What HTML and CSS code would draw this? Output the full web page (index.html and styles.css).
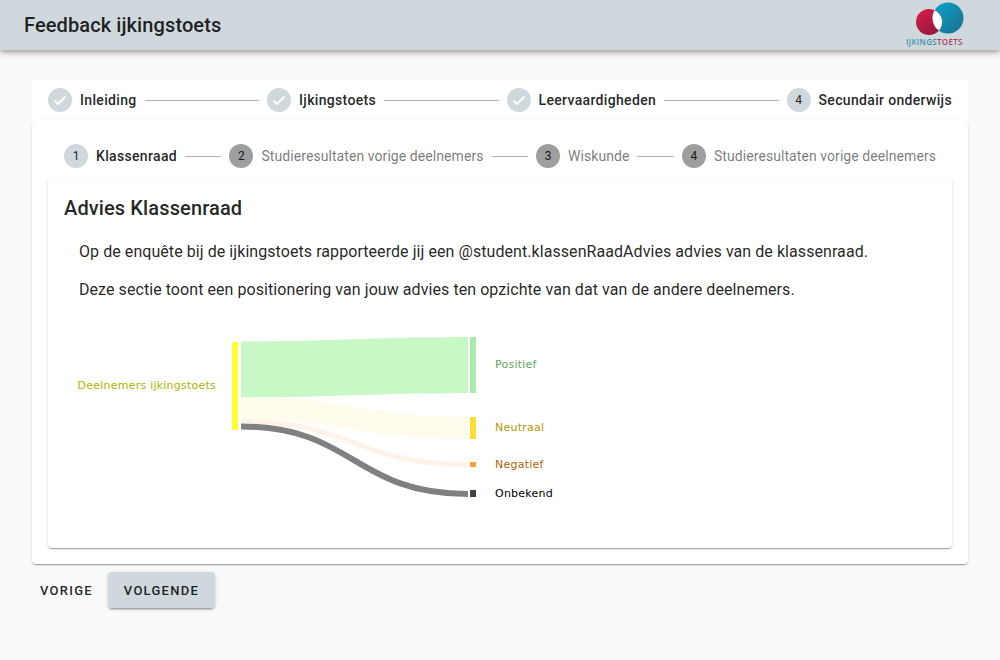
FILE: index.html
```html
<!DOCTYPE html>
<html>
<head>
    <title>Feedback ijkingstoets</title>
    <link rel="stylesheet" href="styles.css">
</head>
<body>
    <header class="topbar">
        <h1>Feedback ijkingstoets</h1>
        <div class="logo">
            <svg width="58" height="36" viewBox="0 0 58 36">
                <defs>
                    <linearGradient id="blue" x1="0" y1="0" x2="1" y2="1">
                        <stop offset="0" stop-color="#0aa3cc"/>
                        <stop offset="1" stop-color="#1d6f8e"/>
                    </linearGradient>
                    <linearGradient id="red" x1="0" y1="0" x2="0.8" y2="1">
                        <stop offset="0" stop-color="#e01a4a"/>
                        <stop offset="1" stop-color="#8e1a3c"/>
                    </linearGradient>
                </defs>
                <circle cx="42" cy="18" r="15.500" fill="url(#blue)"/>
                <circle cx="23" cy="22" r="13" fill="url(#red)"/>
                <path d="M28.600 10.190A13 13 0 0 1 32.880 30.550 15.500 15.500 0 0 1 28.600 10.190Z" fill="#fff"/>
            </svg>
            <span class="logo-text">IJKINGS<b>TOETS</b></span>
        </div>
    </header>

    <main class="page">
        <div class="stepper-top">
            <div class="step">
                <span class="dot"><svg class="check" width="16" height="16" viewBox="0 0 16 16"><path d="M2.500 8.500 6 12 13.500 4.500"/></svg></span>
                <span class="step-label">Inleiding</span>
            </div>
            <div class="line"></div>
            <div class="step">
                <span class="dot"><svg class="check" width="16" height="16" viewBox="0 0 16 16"><path d="M2.500 8.500 6 12 13.500 4.500"/></svg></span>
                <span class="step-label">Ijkingstoets</span>
            </div>
            <div class="line"></div>
            <div class="step">
                <span class="dot"><svg class="check" width="16" height="16" viewBox="0 0 16 16"><path d="M2.500 8.500 6 12 13.500 4.500"/></svg></span>
                <span class="step-label">Leervaardigheden</span>
            </div>
            <div class="line"></div>
            <div class="step">
                <span class="dot">4</span>
                <span class="step-label">Secundair onderwijs</span>
            </div>
        </div>

        <section class="outer-card">
            <div class="stepper-sub">
                <div class="step">
                    <span class="dot">1</span>
                    <span class="step-label">Klassenraad</span>
                </div>
                <div class="line"></div>
                <div class="step">
                    <span class="dot dot-off">2</span>
                    <span class="step-label off">Studieresultaten vorige deelnemers</span>
                </div>
                <div class="line"></div>
                <div class="step">
                    <span class="dot dot-off">3</span>
                    <span class="step-label off">Wiskunde</span>
                </div>
                <div class="line"></div>
                <div class="step">
                    <span class="dot dot-off">4</span>
                    <span class="step-label off">Studieresultaten vorige deelnemers</span>
                </div>
            </div>

            <div class="inner-card">
                <h2>Advies Klassenraad</h2>
                <div class="intro">
                    <p>Op de enquête bij de ijkingstoets rapporteerde jij een @student.klassenRaadAdvies advies van de klassenraad.</p>
                    <p>Deze sectie toont een positionering van jouw advies ten opzichte van dat van de andere deelnemers.</p>
                </div>
                <svg class="sankey" width="600" height="200" viewBox="64 320 600 200">
                    <path d="M241 369.500C354 369.500 354 365 468 365" fill="none" stroke="#c8f8c6" stroke-width="56"/>
                    <path d="M241 408.500C354 408.500 354 428 468 428" fill="none" stroke="#fffcec" stroke-width="22"/>
                    <path d="M241 421.500C354 421.500 354 464.500 468 464.500" fill="none" stroke="#fff2e8" stroke-width="5"/>
                    <path d="M241 426.500C354 426.500 354 494 468 494" fill="none" stroke="#808080" stroke-width="6"/>

                    <rect x="232" y="342" width="6" height="88" fill="#ffff33"/>
                    <rect x="470" y="337" width="6" height="56" fill="#a8eeaa"/>
                    <rect x="470" y="417" width="6" height="22" fill="#ffdd33"/>
                    <rect x="470" y="462" width="6" height="5" fill="#ffa033"/>
                    <rect x="470" y="490" width="6" height="7" fill="#444444"/>

                    <text class="node-text" x="216" y="389" text-anchor="end" fill="#b3b300">Deelnemers ijkingstoets</text>
                    <text class="node-text" x="495" y="368" fill="#5ca85c">Positief</text>
                    <text class="node-text" x="495" y="431" fill="#b39a00">Neutraal</text>
                    <text class="node-text" x="495" y="468" fill="#b36200">Negatief</text>
                    <text class="node-text" x="495" y="497" fill="#000000">Onbekend</text>
                </svg>
            </div>
        </section>

        <div class="actions">
            <button class="btn btn-text">Vorige</button>
            <button class="btn btn-raised">Volgende</button>
        </div>
    </main>
</body>
</html>
```

FILE: styles.css
```css
body {
    margin: 0;
    height: 660px;
    overflow: hidden;
    background-color: #fafafa;
    color: rgba(0, 0, 0, 0.87);
    font-family: Roboto, "Liberation Sans", sans-serif;
}

.topbar {
    height: 50px;
    padding: 0 36px 0 24px;
    display: flex;
    align-items: center;
    justify-content: space-between;
    background-color: #cfd8dc;
    box-shadow: 0 2px 4px -1px rgba(0, 0, 0, 0.2), 0 4px 5px 0 rgba(0, 0, 0, 0.14), 0 1px 10px 0 rgba(0, 0, 0, 0.12);
}

.topbar h1 {
    margin: 0;
    font-size: 20px;
    font-weight: 500;
    letter-spacing: 0.1px;
}

.logo {
    width: 58px;
    align-self: flex-start;
}

.logo svg {
    display: block;
}

.logo-text {
    display: block;
    font-family: "Open Sans", sans-serif;
    font-size: 8px;
    font-weight: 600;
    line-height: 11px;
    letter-spacing: 0.3px;
    color: #3f8fae;
    white-space: nowrap;
}

.logo-text b {
    font-weight: 600;
    color: #b2415f;
}

.page {
    padding: 30px 32px 0;
}

.stepper-top {
    height: 40px;
    padding: 0 16px;
    display: flex;
    align-items: center;
    background-color: #fff;
}

.stepper-sub {
    height: 40px;
    padding: 16px 16px 0;
    display: flex;
    align-items: center;
}

.step {
    display: flex;
    align-items: center;
    gap: 8px;
    white-space: nowrap;
}

.dot {
    width: 24px;
    height: 24px;
    border-radius: 50%;
    display: flex;
    align-items: center;
    justify-content: center;
    background-color: #cfd8dc;
    font-size: 12px;
}

.dot-off {
    background-color: #9e9e9e;
}

.check path {
    fill: none;
    stroke: #fff;
    stroke-width: 2;
}

.step-label {
    font-size: 14px;
    font-weight: 500;
    letter-spacing: 0.33px;
}

.step-label.off {
    font-weight: 400;
    letter-spacing: 0.07px;
    color: rgba(0, 0, 0, 0.54);
}

.line {
    flex: 1;
    margin: 0 8px;
    border-top: 1px solid rgba(0, 0, 0, 0.3);
}

.outer-card {
    height: 444px;
    padding: 0 16px;
    background-color: #fff;
    border-radius: 4px;
    box-shadow: 0 2px 1px -1px rgba(0, 0, 0, 0.2), 0 1px 1px 0 rgba(0, 0, 0, 0.14), 0 1px 3px 0 rgba(0, 0, 0, 0.12);
}

.inner-card {
    height: 371px;
    margin-top: 1px;
    background-color: #fff;
    border-radius: 4px;
    box-shadow: 0 2px 1px -1px rgba(0, 0, 0, 0.2), 0 1px 1px 0 rgba(0, 0, 0, 0.14), 0 1px 3px 0 rgba(0, 0, 0, 0.12);
}

.inner-card h2 {
    margin: 0;
    padding: 16px 16px 0;
    font-size: 20px;
    line-height: 30px;
    font-weight: 500;
    letter-spacing: 0.12px;
}

.intro {
    padding: 17px 16px 0 31px;
    font-size: 16px;
    line-height: 24px;
    letter-spacing: 0.065px;
}

.intro p {
    margin: 0 0 14px;
}

.sankey {
    display: block;
    margin: 18px 0 0 16px;
}

.node-text {
    font-family: "DejaVu Sans", sans-serif;
    font-size: 11px;
    letter-spacing: 0.23px;
}

.actions {
    margin-top: 8px;
    display: flex;
}

.btn {
    height: 36px;
    border: none;
    border-radius: 4px;
    font-family: Roboto, "Liberation Sans", sans-serif;
    font-size: 13px;
    font-weight: 500;
    letter-spacing: 1.25px;
    text-transform: uppercase;
    color: rgba(0, 0, 0, 0.87);
}

.btn-text {
    padding: 0 15px 0 8px;
    background: none;
}

.btn-raised {
    padding: 0 16px;
    background-color: #cfd8dc;
    box-shadow: 0 3px 1px -2px rgba(0, 0, 0, 0.2), 0 2px 2px 0 rgba(0, 0, 0, 0.14), 0 1px 5px 0 rgba(0, 0, 0, 0.12);
}
```
